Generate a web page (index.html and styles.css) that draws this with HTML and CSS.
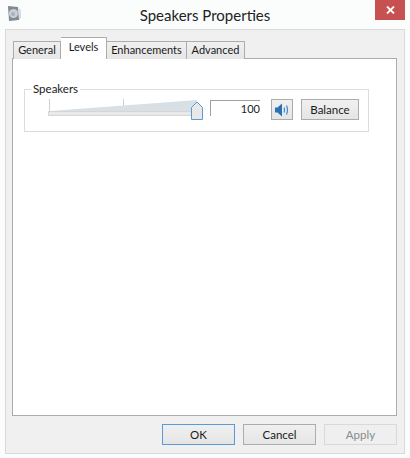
FILE: index.html
```html
<!DOCTYPE html>
<html lang="en">
<head>
    <meta charset="UTF-8">
    <meta name="viewport" content="width=device-width, initial-scale=1.0">
    <title>Speakers Properties</title>
    <link rel="stylesheet" href="styles.css">
</head>
<body>
    <div class="window">
        <header class="titlebar">
            <svg class="app-icon" width="14" height="17" viewBox="0 0 14 17">
                <path d="M1 1 L11 2 L12 15 L2 16 Z" fill="#7f8a92"/>
                <circle cx="6.5" cy="8.5" r="4.5" fill="#c9cfd4"/>
                <circle cx="6" cy="9" r="2" fill="#a9b1b7"/>
                <path d="M12 3 L14 5 L14 13 L12 15 Z" fill="#d5dde2"/>
            </svg>
            <h1>Speakers Properties</h1>
            <div class="close-btn">
                <svg width="9" height="8" viewBox="0 0 9 8">
                    <path d="M1 0.5 L8 7.5 M8 0.5 L1 7.5" stroke="#fff" stroke-width="1.8"/>
                </svg>
            </div>
        </header>

        <div class="dialog">
            <nav class="tabs">
                <div class="tab tab-general">General</div>
                <div class="tab tab-levels active">Levels</div>
                <div class="tab tab-enhancements">Enhancements</div>
                <div class="tab tab-advanced">Advanced</div>
            </nav>

            <main class="panel">
                <fieldset class="group">
                    <legend>Speakers</legend>
                    <div class="level-row">
                        <svg class="slider" width="155" height="21" viewBox="0 0 155 21">
                            <path d="M1.5 0 V12 M75.5 0 V12" stroke="#d0d0d0" fill="none"/>
                            <path d="M2 12 L149 1 V12 Z" fill="#d8e0e6"/>
                            <rect x="0.5" y="12.5" width="148" height="4" fill="#e9e9e9" stroke="#d6d6d6"/>
                            <path d="M143.5 20.5 V8.5 L149 3 L154.5 8.5 V20.5 Z" fill="#e8e8e8" stroke="#5b9bd5"/>
                        </svg>
                        <div class="level-value">100</div>
                        <button class="mute-btn" aria-label="Mute">
                            <svg width="14" height="14" viewBox="0 0 14 14">
                                <path d="M0 4.5 H2.5 L7 0.5 V13.5 L2.5 9.5 H0 Z" fill="#2a72b5"/>
                                <path d="M9 4.5 Q10 7 9 9.5 M11.5 2.5 Q13.4 7 11.5 11.5" stroke="#3f88c9" stroke-width="1.2" fill="none"/>
                            </svg>
                        </button>
                        <button class="btn balance-btn">Balance</button>
                    </div>
                </fieldset>
            </main>

            <footer class="actions">
                <button class="btn default">OK</button>
                <button class="btn">Cancel</button>
                <button class="btn disabled">Apply</button>
            </footer>
        </div>
    </div>
</body>
</html>
```

FILE: styles.css
```css
* {
    margin: 0;
    padding: 0;
    box-sizing: border-box;
    font-family: Lato, 'Open Sans', sans-serif;
}

body {
    background: #fbfdfd;
    color: #1a1a1a;
    font-size: 11.5px;
    width: 410px;
    height: 458px;
    overflow: hidden;
}

.window {
    display: flex;
    flex-direction: column;
    height: 458px;
    padding: 0 5px 4px;
}

.titlebar {
    display: grid;
    grid-template-columns: 30px 1fr 30px;
    height: 29px;
    flex-shrink: 0;
}

.app-icon {
    margin: 5px 0 0 2px;
}

.titlebar h1 {
    font-size: 15px;
    font-weight: 400;
    color: #222;
    text-align: center;
    line-height: 30px;
}

.close-btn {
    width: 30px;
    height: 20px;
    background: #c75050;
    display: flex;
    align-items: center;
    justify-content: center;
}

.dialog {
    flex: 1;
    display: flex;
    flex-direction: column;
    background: #f0f0f0;
    border: 1px solid #d9d9d9;
    padding: 7px 7px 8px 6px;
}

.tabs {
    display: flex;
    align-items: flex-end;
    height: 22px;
    margin-bottom: -1px;
    padding-left: 1px;
    position: relative;
    z-index: 1;
}

.tab {
    height: 18px;
    line-height: 15px;
    font-size: 11px;
    text-align: center;
    background: linear-gradient(#f0f0f0, #e6e6e6);
    border: 1px solid #acacac;
    border-left: none;
    border-bottom: none;
}

.tab-general {
    width: 48px;
    border-left: 1px solid #acacac;
}

.tab-levels {
    width: 46px;
}

.tab-enhancements {
    width: 80px;
}

.tab-advanced {
    width: 58px;
}

.tab.active {
    height: 22px;
    line-height: 18px;
    background: #fff;
}

.panel {
    flex: 1;
    background: #fff;
    border: 1px solid #acacac;
    padding: 24px 27px 0 11px;
}

.group {
    border: 1px solid #dcdcdc;
    height: 51px;
    margin-top: -2px;
}

.group legend {
    margin-left: 6px;
    padding: 0 2px;
    line-height: 16px;
}

.level-row {
    display: flex;
    align-items: flex-start;
    padding-left: 23px;
}

.slider {
    flex-shrink: 0;
    margin-top: 2px;
}

.level-value {
    width: 50px;
    height: 16px;
    margin: 3px 11px 0 7px;
    text-align: right;
    font-size: 11px;
    line-height: 15px;
    border-top: 1px solid #a0a0a0;
    border-left: 1px solid #a0a0a0;
}

button {
    font-size: 11.5px;
    color: #1a1a1a;
    background: linear-gradient(#f0f0f0, #e5e5e5);
    border: 1px solid #acacac;
}

.mute-btn {
    width: 22px;
    height: 21px;
    margin: 2px 8px 0 0;
    display: flex;
    align-items: center;
    justify-content: center;
}

.balance-btn {
    width: 58px;
    height: 21px;
    margin-top: 2px;
}

.actions {
    display: flex;
    justify-content: flex-end;
    gap: 8px;
    padding-top: 8px;
}

.actions .btn {
    width: 73px;
    height: 21px;
}

.btn.default {
    border-color: #5b9bd5;
}

.btn.disabled {
    color: #8a8a8a;
    background: #efefef;
    border-color: #d9d9d9;
}
```
